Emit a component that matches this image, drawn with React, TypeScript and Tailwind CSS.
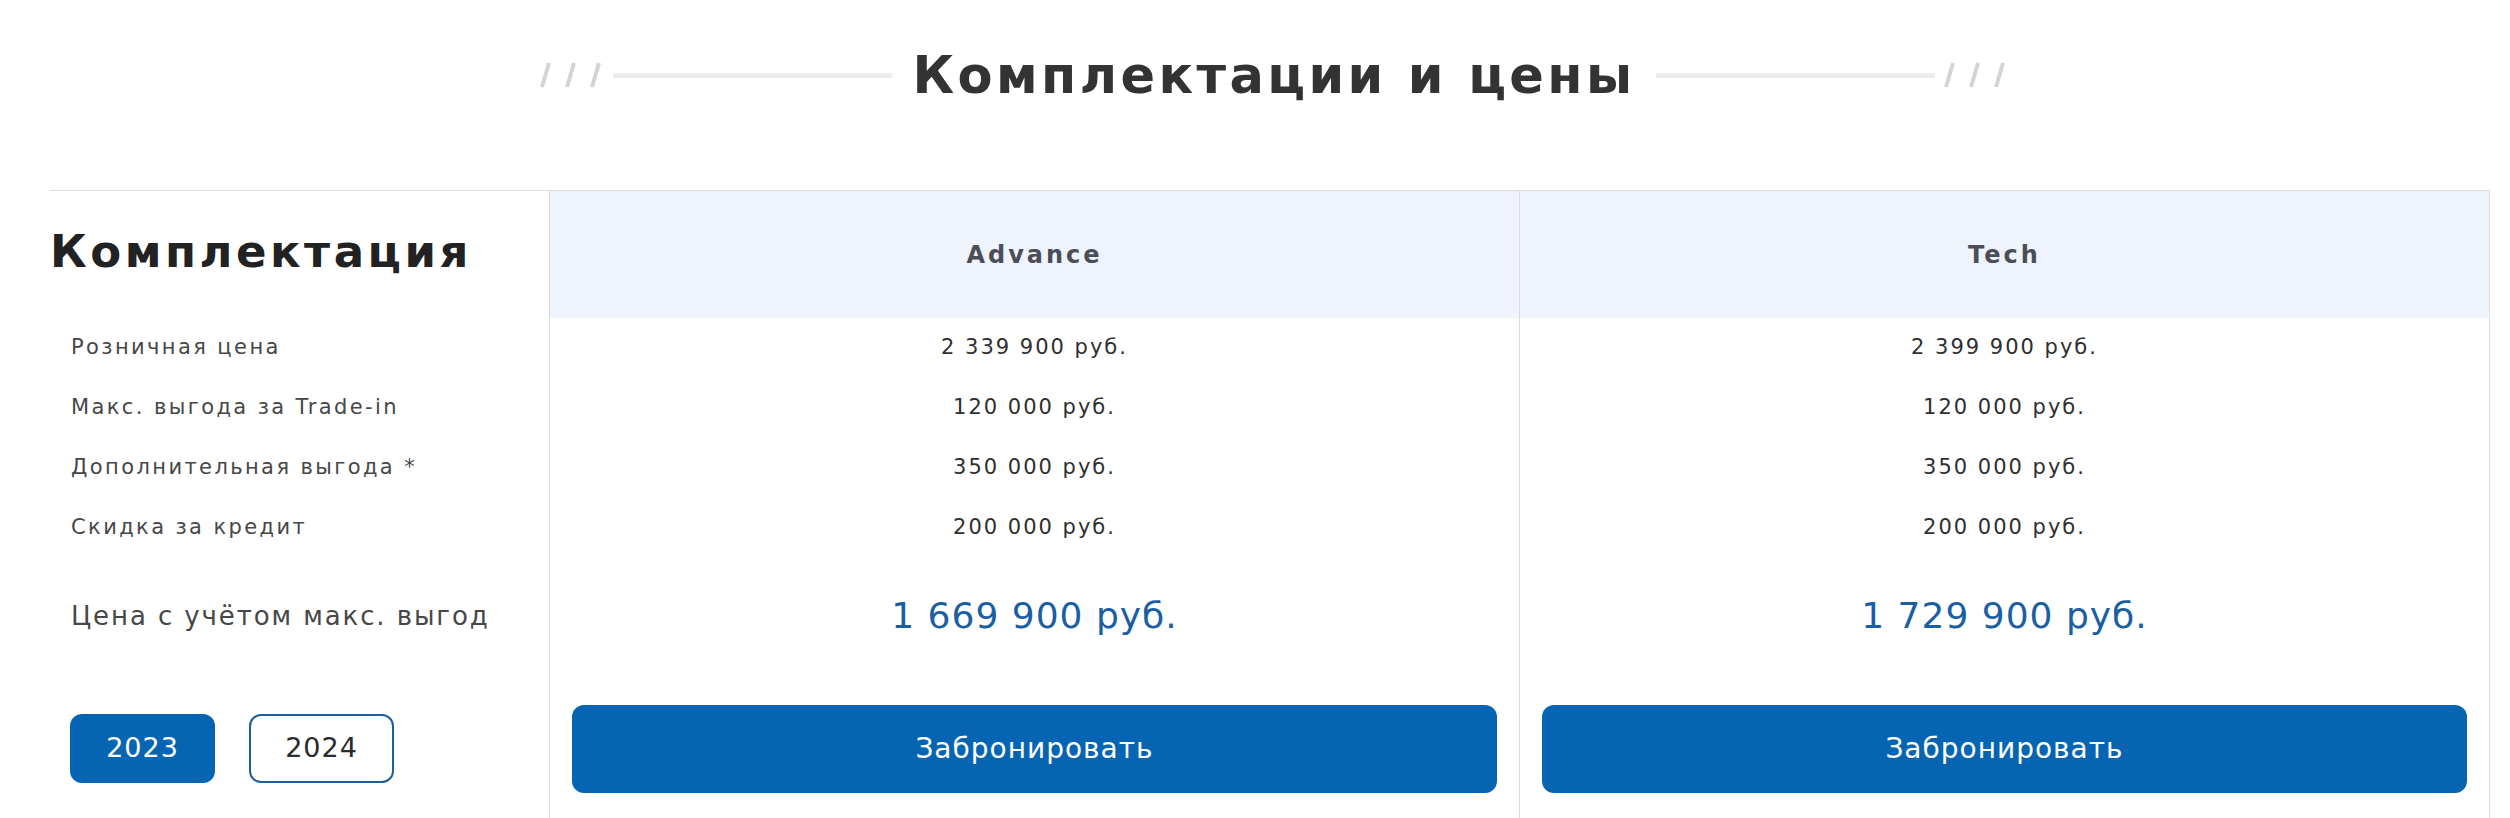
import React from "react";

const Slashes = () => (
  <svg width="70" height="26" viewBox="0 0 70 26" className="shrink-0">
    <line x1="5" y1="25" x2="12" y2="1" stroke="#d4d4d4" strokeWidth="4" />
    <line x1="30" y1="25" x2="37" y2="1" stroke="#d4d4d4" strokeWidth="4" />
    <line x1="55" y1="25" x2="62" y2="1" stroke="#d4d4d4" strokeWidth="4" />
  </svg>
);

const labels = [
  "Розничная цена",
  "Макс. выгода за Trade-in",
  "Дополнительная выгода *",
  "Скидка за кредит",
];

const models = [
  {
    name: "Advance",
    values: ["2 339 900 руб.", "120 000 руб.", "350 000 руб.", "200 000 руб."],
    total: "1 669 900 руб.",
  },
  {
    name: "Tech",
    values: ["2 399 900 руб.", "120 000 руб.", "350 000 руб.", "200 000 руб."],
    total: "1 729 900 руб.",
  },
];

export default function App() {
  return (
    <div className="w-[2510px] h-[818px] overflow-hidden bg-white font-['DejaVu_Sans',sans-serif]">
      <div className="h-[190px] flex items-start justify-center pt-[40px]">
        <div className="flex items-center h-[70px] pl-[38px]">
          <Slashes />
          <div className="w-[279px] h-[5px] bg-[#ececec] ml-[6px]" />
          <h1 className="mx-[20px] text-[51px] font-bold text-[#333] tracking-[3.4px] leading-none">
            Комплектации и цены
          </h1>
          <div className="w-[279px] h-[5px] bg-[#ececec] mr-[6px]" />
          <Slashes />
        </div>
      </div>

      <div className="ml-[50px] w-[2440px] border-t border-[#dcdcdc] flex">
        <div className="w-[499px] flex flex-col">
          <div className="h-[127px] flex items-center">
            <span className="text-[45px] font-bold text-[#222] tracking-[3.5px] leading-none -mt-[6px]">
              Комплектация
            </span>
          </div>
          {labels.map((l) => (
            <div key={l} className="h-[60px] flex items-center pl-[21px] text-[21px] text-[#474747] tracking-[2.4px]">
              {l}
            </div>
          ))}
          <div className="h-[116px] flex items-center pl-[21px] text-[26px] text-[#474747] tracking-[1.9px]">
            Цена с учётом макс. выгод
          </div>
          <div className="pt-[40px] pl-[20px] flex gap-[34px]">
            <button className="w-[145px] h-[69px] rounded-[12px] bg-[#0565b2] text-white text-[27px] tracking-[1px]">
              2023
            </button>
            <button className="w-[145px] h-[69px] rounded-[12px] border-2 border-[#1d5f9c] text-[#2b2b2b] text-[27px] tracking-[1px]">
              2024
            </button>
          </div>
        </div>

        {models.map((m, i) => (
          <div
            key={m.name}
            className={
              i === 1
                ? "w-[971px] h-[640px] flex flex-col border-l border-r border-[#dcdcdc]"
                : "w-[970px] h-[640px] flex flex-col border-l border-[#dcdcdc]"
            }
          >
            <div className="h-[127px] bg-[#eef3fc] flex items-center justify-center text-[24px] font-bold text-[#4b4e56] tracking-[3px]">
              {m.name}
            </div>
            {m.values.map((v, j) => (
              <div key={j} className="h-[60px] flex items-center justify-center text-[21px] text-[#2f2f2f] tracking-[2px]">
                {v}
              </div>
            ))}
            <div className="h-[116px] flex items-center justify-center text-[36px] text-[#1a5ea3] tracking-[1px]">
              {m.total}
            </div>
            <div className="pt-[31px] px-[22px]">
              <button className="w-full h-[88px] rounded-[12px] bg-[#0565b2] text-white text-[28px] tracking-[1px]">
                Забронировать
              </button>
            </div>
          </div>
        ))}
      </div>
    </div>
  );
}
